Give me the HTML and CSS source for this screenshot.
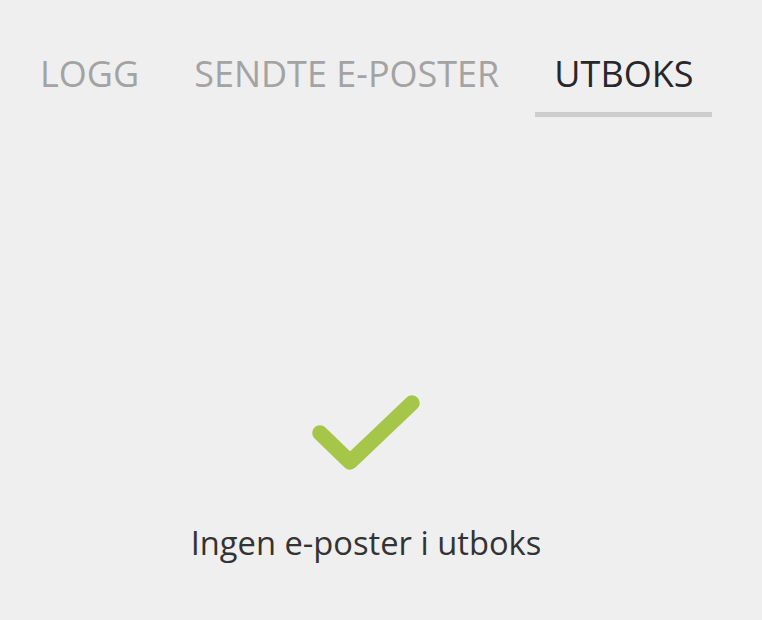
FILE: index.html
```html
<!DOCTYPE html>
<html lang="no">
<head>
<meta charset="utf-8">
<link rel="stylesheet" href="styles.css">
</head>
<body>
<div class="page">
  <nav class="tabs">
    <div class="tab">LOGG</div>
    <div class="tab">SENDTE E-POSTER</div>
    <div class="tab active">UTBOKS</div>
  </nav>
  <div class="empty">
    <svg class="check" width="120" height="90" viewBox="0 0 120 90">
      <path d="M14 44 L44 73 L106 14" fill="none" stroke="#a5c648" stroke-width="15.5" stroke-linecap="round" stroke-linejoin="round"/>
    </svg>
    <div class="msg">Ingen e-poster i utboks</div>
  </div>
</div>
</body>
</html>
```
FILE: styles.css
```css
html, body {
  margin: 0;
  padding: 0;
  background: #efefef;
}
.page {
  width: 732px;
  height: 620px;
  font-family: "Open Sans", sans-serif;
}
.tabs {
  display: flex;
  gap: 17px;
  padding: 44px 0 0 21px;
}
.tab {
  padding: 0 19px 9px;
  font-size: 36px;
  line-height: 59px;
  color: #a3a3a3;
  border-bottom: 5px solid transparent;
}
.tab.active {
  color: #26262b;
  border-bottom-color: #cdcdcd;
}
.empty {
  display: flex;
  flex-direction: column;
  align-items: center;
  padding-top: 272px;
}
.check {
  display: block;
}
.msg {
  margin-top: 41px;
  font-size: 32.7px;
  color: #333;
}
```
